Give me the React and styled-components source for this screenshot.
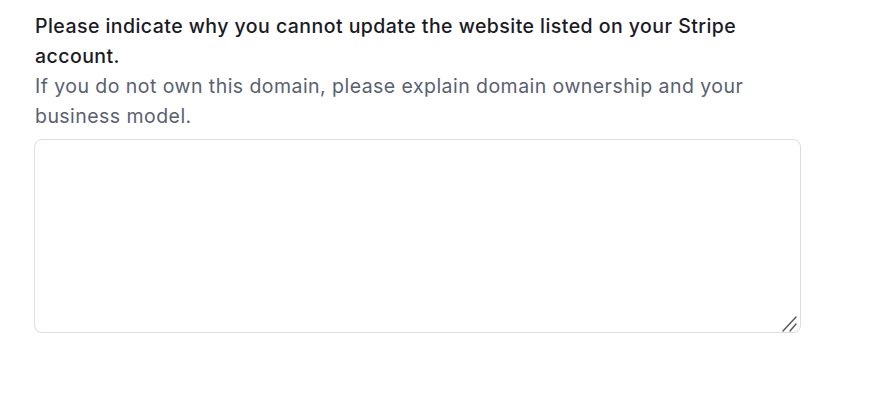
import React from "react";
import styled, { createGlobalStyle } from "styled-components";

const Global = createGlobalStyle`
  html, body { margin: 0; padding: 0; background: #ffffff; }
  body { font-family: Inter, "Noto Sans", sans-serif; -webkit-font-smoothing: antialiased; }
`;

const Page = styled.div`
  padding: 11px 0 0 35px;
  width: 767px;
  display: flex;
  flex-direction: column;
`;

const Title = styled.p`
  margin: 0;
  font-size: 19.5px;
  letter-spacing: 0.45px;
  line-height: 30px;
  font-weight: 500;
  color: #1a1b25;
`;

const Hint = styled.p`
  margin: 0;
  font-size: 19.5px;
  letter-spacing: 0.45px;
  line-height: 30px;
  font-weight: 400;
  color: #596171;
`;

const Field = styled.div`
  position: relative;
  margin: 8px 0 0 -1px;
  width: 767px;
  height: 194px;
`;

const Area = styled.textarea`
  display: block;
  width: 100%;
  height: 100%;
  box-sizing: border-box;
  border: 1px solid #dcdee2;
  border-radius: 8px;
  background: #fff;
  font-family: inherit;
  font-size: 16px;
  padding: 10px 12px;
  resize: none;
  outline: none;
  box-shadow: 0 1px 1px rgba(0,0,0,0.04);
`;

const Grip = styled.svg`
  position: absolute;
  right: 3px;
  bottom: 1px;
  width: 16px;
  height: 16px;
  pointer-events: none;
`;

export default function App() {
  return (
    <>
      <Global />
      <Page>
        <Title>Please indicate why you cannot update the website listed on your Stripe account.</Title>
        <Hint>If you do not own this domain, please explain domain ownership and your business model.</Hint>
        <Field>
          <Area />
          <Grip viewBox="0 0 16 16">
            <line x1="1" y1="15" x2="14" y2="1" stroke="#555" strokeWidth="1.4" strokeLinecap="round" />
            <line x1="8" y1="15" x2="14" y2="8" stroke="#555" strokeWidth="1.4" strokeLinecap="round" />
          </Grip>
        </Field>
      </Page>
    </>
  );
}
